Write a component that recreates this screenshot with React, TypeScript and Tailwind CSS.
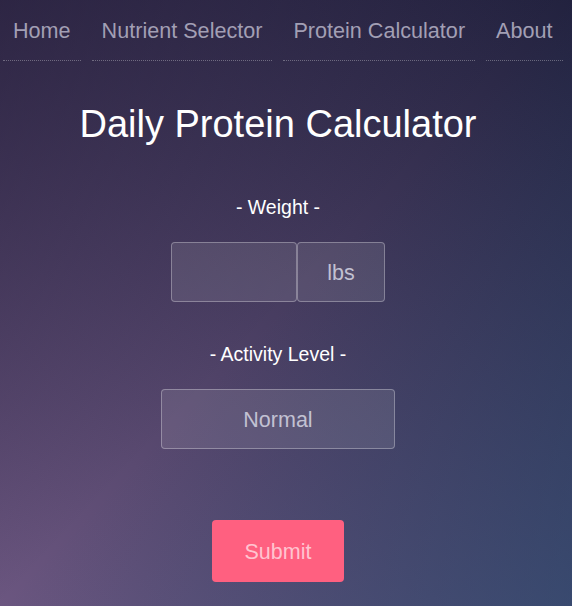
import { useState } from 'react'

const links = ['Home', 'Nutrient Selector', 'Protein Calculator', 'About']

export default function App() {
  const [weight, setWeight] = useState('')

  return (
    <div
      className="min-h-[606px] w-full bg-[linear-gradient(to_bottom_right,rgba(20,15,40,0.5),transparent_50%,rgba(40,90,130,0.45)),linear-gradient(to_top_right,#6b5680,#22223f)] font-['Liberation_Sans',Arial,sans-serif]"
    >
      <nav className="flex gap-[11px] pl-[3px]">
        {links.map((l) => (
          <a
            key={l}
            href="#"
            className="flex h-[61px] items-center border-b border-dotted border-white/30 px-[10px] pt-[2px] text-[21.6px] text-[#a29fb4]"
          >
            {l}
          </a>
        ))}
      </nav>

      <div className="flex flex-col items-center pr-[16px]">
        <h1 className="mt-[41px] text-[38px] leading-[44px] text-white">Daily Protein Calculator</h1>

        <p className="mt-[50px] text-[19.5px] leading-[22px] text-white">- Weight -</p>
        <div className="mt-[24px] flex">
          <input
            value={weight}
            onChange={(e) => setWeight(e.target.value)}
            className="h-[60px] w-[126px] rounded-[4px] border border-white/30 bg-white/10 text-center text-[21px] text-white outline-none"
          />
          <div className="flex h-[60px] w-[88px] items-center justify-center rounded-[4px] border border-white/30 bg-white/10 pt-[2px] text-[21.5px] text-[#c2c1d2]">
            lbs
          </div>
        </div>

        <p className="mt-[41px] text-[19.5px] leading-[22px] text-white">- Activity Level -</p>
        <div className="mt-[24px] flex h-[60px] w-[234px] items-center justify-center rounded-[4px] border border-white/30 bg-white/10 pt-[2px] text-[21.5px] text-[#c2c1d2]">
          Normal
        </div>

        <button className="mt-[71px] h-[62px] w-[132px] rounded-[4px] bg-[#ff6080] pt-[3px] text-[21.5px] text-[#ffc4d0]">
          Submit
        </button>
      </div>
    </div>
  )
}
